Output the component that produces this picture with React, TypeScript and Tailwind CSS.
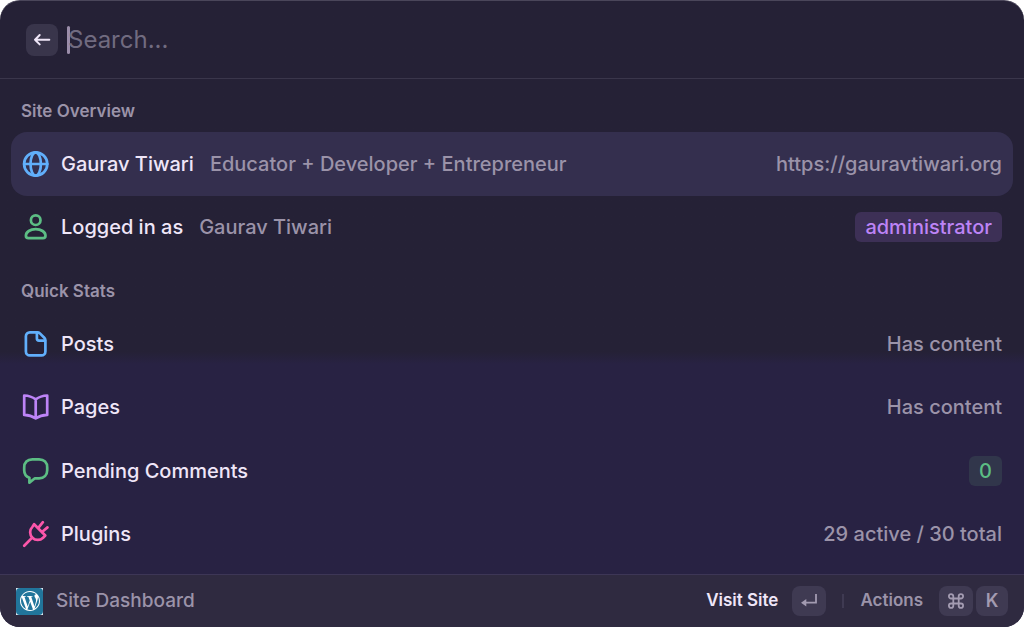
import type { ReactNode } from "react";
import { SiWordpress } from "react-icons/si";

const iconProps = {
  viewBox: "0 0 28 28",
  fill: "none",
  stroke: "currentColor",
  strokeWidth: 2.7,
  strokeLinecap: "round" as const,
  strokeLinejoin: "round" as const,
  "aria-hidden": true,
};

const GlobeIcon = () => (
  <svg {...iconProps} className="size-7 shrink-0 text-[#61affb]">
    <circle cx="13.7" cy="14" r="11.6" />
    <ellipse cx="13.7" cy="14" rx="5.2" ry="11.6" />
    <path d="M2.1 14h23.2" />
  </svg>
);

const PersonIcon = () => (
  <svg {...iconProps} className="size-7 shrink-0 text-[#5cbd84]">
    <circle cx="13.7" cy="7.2" r="4.8" />
    <path d="M13.7 16.2c-5.4 0-9.8 2.6-9.8 6.6 0 1.500 1 2.400 2.500 2.400h14.600c1.500 0 2.500-.9 2.500-2.400 0-4-4.400-6.600-9.800-6.600z" />
  </svg>
);

const DocumentIcon = () => (
  <svg {...iconProps} className="size-7 shrink-0 text-[#61affb]">
    <path d="M7.900 2.300h7.400c1 0 1.900.4 2.600 1.100l4.400 4.400c.7.7 1.100 1.600 1.100 2.600v11c0 2.300-1.700 4-4 4H7.900c-2.300 0-4-1.700-4-4V6.300c0-2.300 1.700-4 4-4z" />
    <path d="M14.900 2.600v6c0 1.200.9 2.100 2.100 2.100h6" />
  </svg>
);

const BookIcon = () => (
  <svg {...iconProps} className="size-7 shrink-0 text-[#bd84f7]">
    <path d="M13.700 6.300C10.500 4 6.600 2.700 2.200 2.500v19.400c4.400.2 8.300 1.400 11.500 3.500 3.200-2.100 7.100-3.300 11.500-3.500V2.500C20.800 2.700 16.900 4 13.700 6.300zM13.700 6.300v19" />
  </svg>
);

const CommentIcon = () => (
  <svg {...iconProps} className="size-7 shrink-0 text-[#5cbd84]">
    <path d="M10.300 2.300h6.800c5 0 8.100 3.100 8.100 8.100v2.800c0 5-3.100 8.100-8.100 8.100h-4.200l-5.500 4.300v-4.800c-3.200-1.200-5.200-3.900-5.200-7.600v-2.800c0-5 3.100-8.100 8.100-8.100z" />
  </svg>
);

const PlugIcon = () => (
  <svg {...iconProps} className="size-7 shrink-0 text-[#fb56aa]">
    <path d="M12.100 4.200 23.300 15.500l-2.200 2.200c-3 3-7.700 3-10.700 0s-3-7.800 0-10.800z" />
    <path d="M10.200 17.600 2.200 25.700M16.300 7.800l4.600-5.600M20.300 11.800l5.200-4.400" />
  </svg>
);

const ArrowLeftIcon = () => (
  <svg viewBox="0 0 20 20" fill="none" stroke="currentColor" strokeWidth="2" strokeLinecap="round" strokeLinejoin="round" className="size-5" aria-hidden="true">
    <path d="M17.300 9.700H3M7.700 5 3 9.700l4.700 4.700" />
  </svg>
);

const ReturnIcon = () => (
  <svg viewBox="0 0 20 20" className="size-5" aria-hidden="true">
    <path d="M17 3v8.700H6" fill="none" stroke="currentColor" strokeWidth="1.800" />
    <path d="M2 11.700 7.300 8v7.400z" fill="currentColor" />
  </svg>
);

const CommandIcon = () => (
  <svg viewBox="0 0 20 20" fill="none" stroke="currentColor" strokeWidth="1.800" className="size-5" aria-hidden="true">
    <path d="M7.300 7.300v-2a2.200 2.200 0 1 0-2.200 2.200h9.800a2.200 2.200 0 1 0-2.200-2.200v9.400a2.200 2.200 0 1 0 2.200-2.200H5.100a2.200 2.200 0 1 0 2.200 2.200z" />
  </svg>
);

type RowProps = {
  icon: ReactNode;
  title: string;
  subtitle?: string;
  selected?: boolean;
  children: ReactNode;
};

function Row({ icon, title, subtitle, selected = false, children }: RowProps) {
  return (
    <li className="flex">
      <button
        type="button"
        aria-current={selected}
        className={`flex w-full items-center rounded-2xl px-[11px] text-left text-xl font-medium ${selected ? "bg-[#342f4e]" : ""}`}
      >
        {icon}
        <span className="ml-[11px] text-[#efe6f8]">{title}</span>
        {subtitle && <span className="ml-4 text-[#9b93a9]">{subtitle}</span>}
        <span className="ml-auto text-[#9b93a9]">{children}</span>
      </button>
    </li>
  );
}

const SectionTitle = ({ children }: { children: ReactNode }) => (
  <h2 className="px-[10px] pt-5 pb-[9px] text-[17px] leading-6 font-semibold text-[#9b93a9]">{children}</h2>
);

const Key = ({ children }: { children: ReactNode }) => (
  <kbd className="flex h-[30px] min-w-8 items-center justify-center rounded-lg bg-[#3f3a52] px-[7px] font-[inherit] text-lg text-[#a39bb1]">
    {children}
  </kbd>
);

export default function App() {
  return (
    <div className="min-h-screen bg-white">
      <div className="flex min-h-screen flex-col overflow-hidden rounded-[20px] border-t border-[#4a465a] bg-linear-to-b from-[#252136] from-56% to-[#282243] to-58% font-['Inter',sans-serif]">
        <header className="flex h-[78px] items-center border-b border-[#3a364b] pl-[26px]">
          <button type="button" aria-label="Back" className="flex size-8 items-center justify-center rounded-lg bg-[#39354b] text-[#efe6f8]">
            <ArrowLeftIcon />
          </button>
          <span className="ml-[9px] h-7 w-[3px] rounded-sm bg-[#9b8daa]" />
          <input
            type="text"
            aria-label="Search"
            placeholder="Search..."
            className="-ml-[2px] min-w-0 flex-1 bg-transparent text-2xl text-[#efe6f8] outline-none placeholder:text-[#716b80]"
          />
        </header>

        <main className="flex-1 px-[11px]">
          <section>
            <SectionTitle>Site Overview</SectionTitle>
            <ul className="grid min-h-[127px] auto-rows-fr">
              <Row icon={<GlobeIcon />} title="Gaurav Tiwari" subtitle="Educator + Developer + Entrepreneur" selected>
                https://gauravtiwari.org
              </Row>
              <Row icon={<PersonIcon />} title="Logged in as" subtitle="Gaurav Tiwari">
                <span className="block rounded-md bg-[#3d3056] px-[10px] leading-[30px] text-[#bd84f7]">administrator</span>
              </Row>
            </ul>
          </section>
          <section>
            <SectionTitle>Quick Stats</SectionTitle>
            <ul className="grid min-h-[254px] auto-rows-fr">
              <Row icon={<DocumentIcon />} title="Posts">Has content</Row>
              <Row icon={<BookIcon />} title="Pages">Has content</Row>
              <Row icon={<CommentIcon />} title="Pending Comments">
                <span className="block rounded-md bg-[#31364b] px-[10px] leading-[30px] text-[#5cbd84]">0</span>
              </Row>
              <Row icon={<PlugIcon />} title="Plugins">29 active / 30 total</Row>
            </ul>
          </section>
        </main>

        <footer className="flex h-[53px] items-center border-t border-[#3d3656] bg-[#2f2a40] px-4 text-[17px] font-semibold text-[#9b93a9]">
          <span className="bg-[#e4edf2]">
            <span className="flex size-[27px] items-center justify-center rounded-[4px] bg-[#21759b] text-white">
              <SiWordpress className="size-5" aria-hidden="true" />
            </span>
          </span>
          <span className="ml-[13px] text-[19px] font-medium">Site Dashboard</span>
          <button type="button" className="ml-auto flex items-center gap-[14px] text-[#efe6f8]">
            Visit Site
            <Key><ReturnIcon /></Key>
          </button>
          <span className="mx-4 h-[14px] w-[2px] bg-[#3f3a52]" />
          <button type="button" className="flex items-center gap-4">
            Actions
            <span className="flex gap-[3px]">
              <Key><CommandIcon /></Key>
              <Key>K</Key>
            </span>
          </button>
        </footer>
      </div>
    </div>
  );
}
